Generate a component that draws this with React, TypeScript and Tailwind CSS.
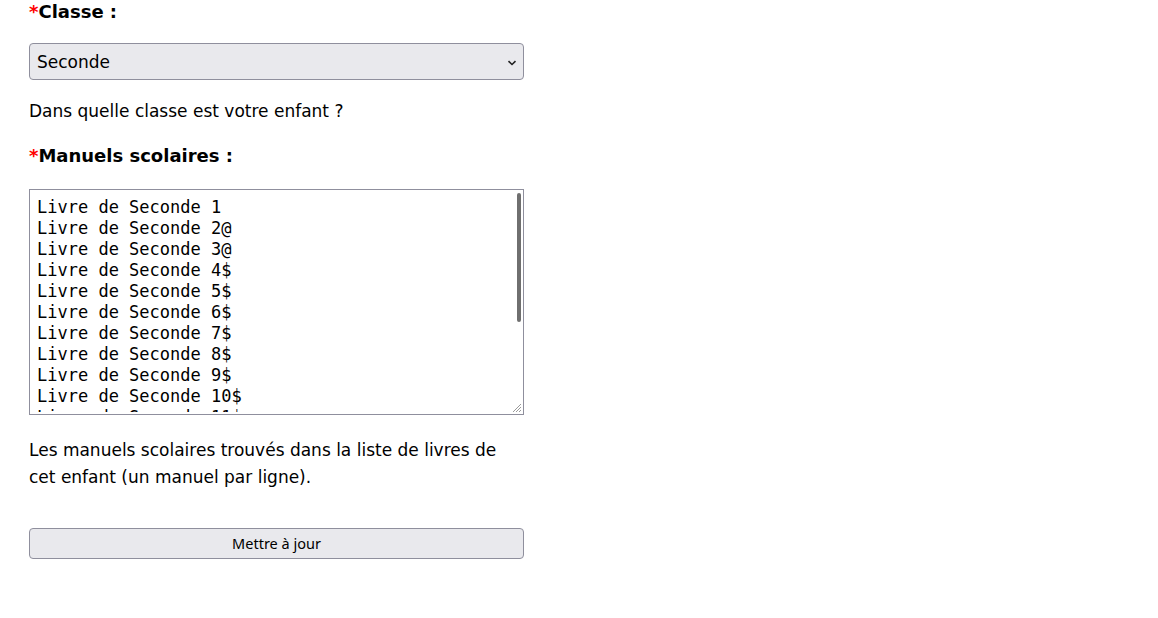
import React from "react";

const lines = [
  "Livre de Seconde 1",
  "Livre de Seconde 2@",
  "Livre de Seconde 3@",
  "Livre de Seconde 4$",
  "Livre de Seconde 5$",
  "Livre de Seconde 6$",
  "Livre de Seconde 7$",
  "Livre de Seconde 8$",
  "Livre de Seconde 9$",
  "Livre de Seconde 10$",
  "Livre de Seconde 11$",
];

export default function App() {
  return (
    <div
      className="min-h-[618px] w-full bg-white text-black pl-[29px]"
      style={{ fontFamily: "'DejaVu Sans', sans-serif" }}
    >
      <div className="w-[495px] flex flex-col">
        <div className="h-[24px] leading-[24px] text-[18px] font-bold">
          <span className="text-[#ff0000]">*</span>Classe :
        </div>
        <div className="mt-[19px] h-[37px] rounded-[4px] border border-[#8f8f9d] bg-[#e9e9ed] flex items-center justify-between pl-[7px] pr-[6px]">
          <span className="text-[17px] pt-[2px]">Seconde</span>
          <svg width="10" height="6" viewBox="0 0 10 6" className="mt-[2px]">
            <path d="M1.5 1.2 L5 4.5 L8.5 1.2" fill="none" stroke="#222" strokeWidth="1.6" />
          </svg>
        </div>
        <p className="mt-[18px] text-[17px] leading-[27px]">Dans quelle classe est votre enfant ?</p>
        <div className="mt-[19px] h-[24px] leading-[24px] text-[18px] font-bold">
          <span className="text-[#ff0000]">*</span>Manuels scolaires :
        </div>
        <div className="relative mt-[21px] h-[226px] border border-[#8f8f9d] bg-white overflow-hidden">
          <div
            className="pl-[7px] pt-[7px] text-[17px] leading-[21px] whitespace-pre"
            style={{ fontFamily: "'DejaVu Sans Mono', monospace" }}
          >
            {lines.map((l) => (
              <div key={l}>{l}</div>
            ))}
          </div>
          <div className="absolute inset-x-0 bottom-0 h-[2px] bg-white" />
          <div className="absolute right-[2px] top-[3px] w-[4px] h-[129px] rounded-[2px] bg-[#6f6f6f]" />
          <svg width="12" height="12" viewBox="0 0 12 12" className="absolute right-[1px] bottom-[1px]">
            <path d="M11 3 L3 11 M11 6 L6 11 M11 9 L9 11" stroke="#9a9a9a" strokeWidth="1" />
          </svg>
        </div>
        <p className="mt-[22px] text-[17px] leading-[27px]">
          Les manuels scolaires trouvés dans la liste de livres de cet enfant (un manuel par ligne).
        </p>
        <button
          className="mt-[37px] h-[31px] rounded-[4px] border border-[#8f8f9d] bg-[#e9e9ed] text-[14.5px] text-black"
          style={{ fontFamily: "'Noto Sans', sans-serif" }}
        >
          Mettre à jour
        </button>
      </div>
    </div>
  );
}
